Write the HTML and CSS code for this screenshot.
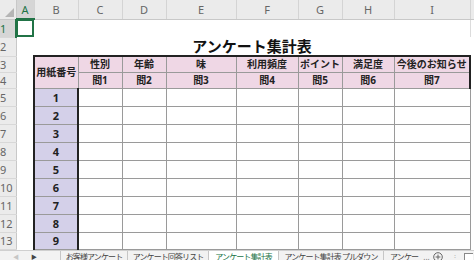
FILE: index.html
```html
<!DOCTYPE html>
<html lang="ja">
<head>
<meta charset="UTF-8">
<title>アンケート集計表</title>
<link rel="stylesheet" href="styles.css">
</head>
<body>
<div class="book">
<table class="sheet">
<colgroup>
<col class="w-rh"><col class="w-a"><col class="w-b"><col class="w-c"><col class="w-d"><col class="w-e"><col class="w-f"><col class="w-g"><col class="w-h"><col class="w-i"><col class="w-j">
</colgroup>
<tr class="r-head">
<th class="corner"><span class="tri"></span></th>
<th class="col sel">A</th><th class="col">B</th><th class="col">C</th><th class="col">D</th><th class="col">E</th><th class="col">F</th><th class="col">G</th><th class="col">H</th><th class="col">I</th><th class="col"></th>
</tr>
<tr class="r-std">
<th class="row sel">1</th><td class="active"></td><td></td><td></td><td></td><td></td><td></td><td></td><td></td><td class="edge"></td><td></td>
</tr>
<tr class="r-std">
<th class="row">2</th><td></td><td colspan="8" class="title">アンケート集計表</td><td></td>
</tr>
<tr class="r-thin">
<th class="row">3</th><td></td>
<td rowspan="2" class="hd id-head">用紙番号</td>
<td class="hd">性別</td><td class="hd">年齢</td><td class="hd">味</td><td class="hd">利用頻度</td><td class="hd">ポイント</td><td class="hd">満足度</td><td class="hd last">今後のお知らせ</td><td></td>
</tr>
<tr class="r-thin">
<th class="row">4</th><td></td>
<td class="hd">問1</td><td class="hd">問2</td><td class="hd">問3</td><td class="hd">問4</td><td class="hd">問5</td><td class="hd">問6</td><td class="hd last">問7</td><td></td>
</tr>
<tr class="r-std"><th class="row">5</th><td></td><td class="no">1</td><td class="c"></td><td class="c"></td><td class="c"></td><td class="c"></td><td class="c"></td><td class="c"></td><td class="c last"></td><td></td></tr>
<tr class="r-std"><th class="row">6</th><td></td><td class="no">2</td><td class="c"></td><td class="c"></td><td class="c"></td><td class="c"></td><td class="c"></td><td class="c"></td><td class="c last"></td><td></td></tr>
<tr class="r-std"><th class="row">7</th><td></td><td class="no">3</td><td class="c"></td><td class="c"></td><td class="c"></td><td class="c"></td><td class="c"></td><td class="c"></td><td class="c last"></td><td></td></tr>
<tr class="r-std"><th class="row">8</th><td></td><td class="no">4</td><td class="c"></td><td class="c"></td><td class="c"></td><td class="c"></td><td class="c"></td><td class="c"></td><td class="c last"></td><td></td></tr>
<tr class="r-std"><th class="row">9</th><td></td><td class="no">5</td><td class="c"></td><td class="c"></td><td class="c"></td><td class="c"></td><td class="c"></td><td class="c"></td><td class="c last"></td><td></td></tr>
<tr class="r-std"><th class="row">10</th><td></td><td class="no">6</td><td class="c"></td><td class="c"></td><td class="c"></td><td class="c"></td><td class="c"></td><td class="c"></td><td class="c last"></td><td></td></tr>
<tr class="r-std"><th class="row">11</th><td></td><td class="no">7</td><td class="c"></td><td class="c"></td><td class="c"></td><td class="c"></td><td class="c"></td><td class="c"></td><td class="c last"></td><td></td></tr>
<tr class="r-std"><th class="row">12</th><td></td><td class="no">8</td><td class="c"></td><td class="c"></td><td class="c"></td><td class="c"></td><td class="c"></td><td class="c"></td><td class="c last"></td><td></td></tr>
<tr class="r-last"><th class="row">13</th><td></td><td class="no">9</td><td class="c"></td><td class="c"></td><td class="c"></td><td class="c"></td><td class="c"></td><td class="c"></td><td class="c last"></td><td></td></tr>
</table>

<div class="tabbar">
<div class="nav"><span class="arrow dim">&#9664;</span><span class="arrow">&#9654;</span></div>
<div class="tab t1">お客様アンケート</div>
<div class="tab t2">アンケート回答リスト</div>
<div class="tab t3 on">アンケート集計表</div>
<div class="tab t4">アンケート集計表 プルダウン</div>
<div class="tab t5">アンケー <span class="dots">...</span></div>
<div class="plus">
<svg width="10" height="10" viewBox="0 0 10 10"><circle cx="5" cy="5" r="4.3" fill="none" stroke="#666" stroke-width="1"/><path d="M5 2.6v4.8M2.6 5h4.8" stroke="#666" stroke-width="1"/></svg>
</div>
<div class="vdots">&#8942;</div>
<div class="box"></div>
</div>
</div>
</body>
</html>
```

FILE: styles.css
```css
html, body {
margin: 0;
padding: 0;
background: #fff;
}
body {
font-family: "Noto Sans", "Noto Sans CJK JP", sans-serif;
}
.book {
width: 474px;
height: 260px;
overflow: hidden;
display: flex;
flex-direction: column;
}
.sheet {
border-collapse: collapse;
table-layout: fixed;
width: 474px;
height: 246px;
flex-shrink: 0;
}
.w-rh { width: 16px; }
.w-a { width: 18px; }
.w-b { width: 44px; }
.w-c { width: 44px; }
.w-d { width: 44px; }
.w-e { width: 70px; }
.w-f { width: 62px; }
.w-g { width: 44px; }
.w-h { width: 52px; }
.w-i { width: 76px; }
.w-j { width: 4px; }
.sheet th, .sheet td {
padding: 0;
overflow: hidden;
white-space: nowrap;
}
.r-head { height: 19px; }
.r-std { height: 18px; }
.r-thin { height: 15px; }
.r-last { height: 17px; }

/* headers */
.col {
background: #ebebeb;
color: #666;
font-weight: normal;
font-size: 11px;
border-right: 1px solid #d4d4d4;
border-bottom: 1px solid #c8c8c8;
}
.col.sel {
background: #d6d6d6;
color: #217346;
border-bottom: 2px solid #217346;
}
.corner {
background: #ebebeb;
border-right: 1px solid #c8c8c8;
border-bottom: 1px solid #c8c8c8;
position: relative;
}
.tri {
position: absolute;
right: 2px;
bottom: 2px;
width: 0;
height: 0;
border-left: 9px solid transparent;
border-bottom: 9px solid #b5b5b5;
}
.row {
background: #ebebeb;
color: #666;
font-weight: normal;
font-size: 11px;
text-align: left;
padding-left: 2px;
border-right: 1px solid #c8c8c8;
border-bottom: 1px solid #d8d8d8;
}
.row.sel {
background: #d6d6d6;
color: #217346;
border-right: 2px solid #217346;
}
.active {
outline: 2px solid #217346;
outline-offset: -2px;
}
.edge {
border-right: 1px solid #dcdcdc;
}

/* table body */
.title {
text-align: center;
vertical-align: middle;
font-size: 15px;
font-weight: bold;
color: #111;
line-height: 18px;
padding-top: 2px;
}
.hd {
background: #efd7e5;
text-align: center;
font-size: 10px;
font-weight: bold;
color: #222;
line-height: 13px;
border: 1px solid #9a9a9a;
}
.sheet tr.r-thin:nth-child(4) .hd {
border-top: 2px solid #222;
}
.id-head {
border-left: 2px solid #222;
}
.last {
border-right: 2px solid #222;
}
.no {
background: #d4d0e9;
text-align: center;
font-size: 11px;
font-weight: bold;
color: #222;
border-left: 2px solid #222;
border-right: 2px solid #222;
border-bottom: 1px solid #9a9a9a;
}
.c {
border: 1px solid #9a9a9a;
}

/* sheet tabs */
.tabbar {
display: flex;
align-items: stretch;
height: 14px;
flex-shrink: 0;
background: #f2f2f2;
border-top: 1px solid #cfcfcf;
box-sizing: border-box;
font-size: 8px;
letter-spacing: -0.9px;
color: #444;
line-height: 12px;
}
.nav {
width: 60px;
flex-shrink: 0;
display: flex;
gap: 12px;
padding-left: 13px;
box-sizing: border-box;
letter-spacing: 0;
}
.arrow {
font-size: 6px;
color: #444;
}
.arrow.dim {
color: #c6c6c6;
}
.tab {
flex-shrink: 0;
text-align: center;
border-left: 1px solid #c6c6c6;
white-space: nowrap;
box-sizing: border-box;
}
.t1 { width: 67px; }
.t2 { width: 81px; }
.t3 { width: 70px; }
.t4 { width: 105px; }
.t5 { width: 46px; text-align: left; padding-left: 6px; }
.tab.on {
background: #fff;
color: #217346;
border-bottom: 1px solid #217346;
}
.dots {
color: #777;
margin-left: 4px;
letter-spacing: 0;
}
.plus {
display: flex;
align-items: center;
padding-left: 4px;
flex-shrink: 0;
}
.vdots {
color: #bbb;
padding-left: 8px;
flex-shrink: 0;
}
.box {
width: 8px;
height: 9px;
margin: 2px 0 0 6px;
border: 1px solid #888;
border-right: none;
background: #fff;
flex-shrink: 0;
}
```
